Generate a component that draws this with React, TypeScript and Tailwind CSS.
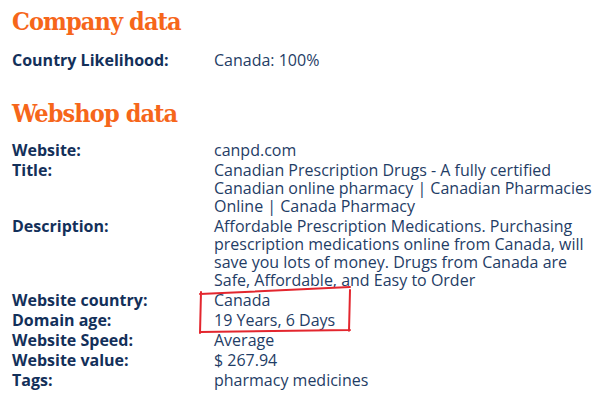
const rowsCompany = [{ label: "Country Likelihood:", value: "Canada: 100%" }];

const rowsWebshop = [
  { label: "Website:", value: "canpd.com" },
  {
    label: "Title:",
    value:
      "Canadian Prescription Drugs - A fully certified Canadian online pharmacy | Canadian Pharmacies Online | Canada Pharmacy",
  },
  {
    label: "Description:",
    value:
      "Affordable Prescription Medications. Purchasing prescription medications online from Canada, will save you lots of money. Drugs from Canada are Safe, Affordable, and Easy to Order",
  },
  { label: "Website country:", value: "Canada" },
  { label: "Domain age:", value: "19 Years, 6 Days" },
  { label: "Website Speed:", value: "Average" },
  { label: "Website value:", value: "$ 267.94" },
  { label: "Tags:", value: "pharmacy medicines" },
];

function Heading({ children }: { children: string }) {
  return (
    <h2
      className="text-[25px] font-bold leading-[32px] text-[#f6661a] tracking-[-0.9px]"
      style={{ fontFamily: "'DejaVu Serif Condensed', 'DejaVu Serif', serif" }}
    >
      {children}
    </h2>
  );
}

function Row({ label, value }: { label: string; value: string }) {
  return (
    <div className="flex py-px leading-[18px] text-[16px]">
      <div className="w-[202px] shrink-0 font-bold text-[#13305a]">{label}</div>
      <div className="w-[385px] text-[#1f3d66]">{value}</div>
    </div>
  );
}

export default function App() {
  return (
    <div
      className="relative w-[605px] h-[403px] bg-white overflow-hidden pl-3"
      style={{ fontFamily: "'Open Sans', sans-serif" }}
    >
      <div className="pt-[6px]">
        <Heading>Company data</Heading>
      </div>
      <div className="mt-[12px]">
        {rowsCompany.map((r) => (
          <Row key={r.label} {...r} />
        ))}
      </div>
      <div className="mt-[28px]">
        <Heading>Webshop data</Heading>
      </div>
      <div className="mt-[10px]">
        {rowsWebshop.map((r) => (
          <Row key={r.label} {...r} />
        ))}
      </div>

      <svg className="absolute left-0 top-0 pointer-events-none" width="605" height="403">
        <path
          d="M200 294 L350 287 M201 292 L200 333 M200 332 L350 330 M350 290 L349 331"
          stroke="#e3262e"
          strokeWidth="2"
          fill="none"
          strokeLinecap="round"
        />
      </svg>
    </div>
  );
}
